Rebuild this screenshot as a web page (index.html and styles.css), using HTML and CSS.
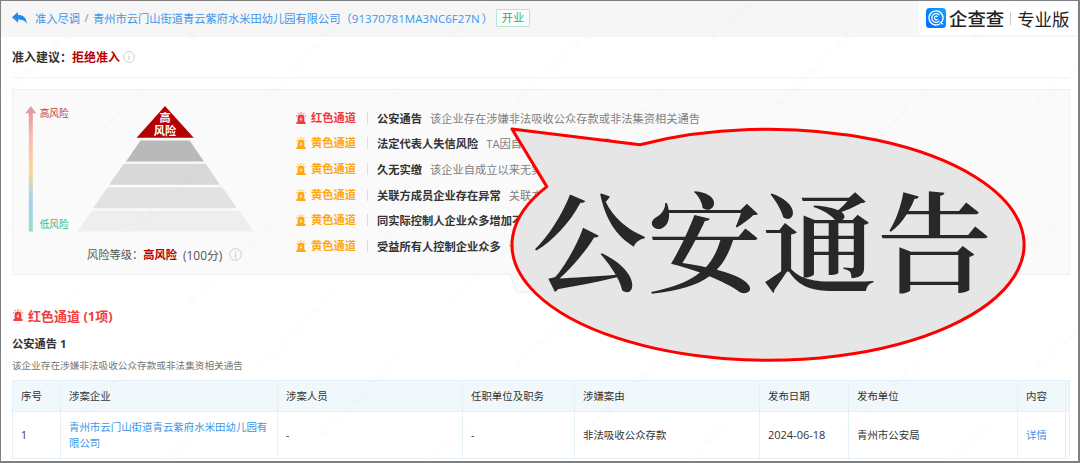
FILE: index.html
```html
<!DOCTYPE html>
<html lang="zh-CN">
<head>
<meta charset="utf-8">
<title>准入尽调</title>
<link rel="stylesheet" href="styles.css">
</head>
<body>

<svg width="0" height="0" class="defs">
	<symbol id="siren" viewBox="0 0 10 12">
		<path d="M5 0v1.700M1.800 .900l.900 1.400M8.200 .900l-.900 1.400M0 3.400l1.300.700M10 3.400l-1.300.700" stroke="currentColor" stroke-width=".9" fill="none"/>
		<path fill="currentColor" fill-rule="evenodd" d="M1.600 10.200V6a3.400 3.400 0 0 1 6.800 0v4.200zM5 5.500a1.300 1.300 0 0 0-1 2.100L4.700 8.700h.6L6 7.600A1.300 1.300 0 0 0 5 5.500z"/>
		<circle cx="5" cy="6.800" r=".7" fill="currentColor"/>
		<path fill="currentColor" d="M.400 10h9.200v2H.400z"/>
	</symbol>
	<symbol id="info" viewBox="0 0 12 12">
		<circle cx="6" cy="6" r="5.4" fill="none" stroke="currentColor" stroke-width=".9"/>
		<path d="M6 5v4M6 2.9v1.2" stroke="currentColor" stroke-width="1.1"/>
	</symbol>
</svg>

<div class="page">
	<header class="top">
		<svg class="back" viewBox="0 0 15 12"><path fill="#2189f0" d="M6 0v3.1c5.300 0 8.200 2.600 8.800 8.300C12.800 8.500 10.200 7.500 6 7.500v3.300L0 5.300z"/></svg>
		<a class="crumb">准入尽调</a>
		<span class="slash">/</span>
		<a class="company">青州市云门山街道青云紫府水米田幼儿园有限公司（<span class="code">91370781MA3NC6F27N</span>）</a>
		<span class="tag">开业</span>
		<div class="brand">
			<svg class="logo" viewBox="0 0 20 20">
				<defs><linearGradient id="blue" x1="0" y1="1" x2="1" y2="0"><stop offset="0" stop-color="#0066ff"/><stop offset="1" stop-color="#14a6fb"/></linearGradient></defs>
				<rect width="20" height="20" rx="3.500" fill="url(#blue)"/>
				<g fill="none" stroke="#fff" stroke-width="1.300">
					<path d="M14 15.700A7 7 0 1 1 16.400 12.800L14.700 14.700l2 1.600"/>
					<path d="M13.300 12.800A4.300 4.300 0 1 1 13.300 7.200"/>
					<path d="M11.600 11.200A1.800 1.800 0 1 1 11.600 8.800"/>
				</g>
			</svg>
			<span class="name">企查查</span>
			<i class="bar"></i>
			<span class="edition">专业版</span>
		</div>
	</header>

	<div class="advice">
		<b>准入建议：</b><b class="reject">拒绝准入</b>
		<svg class="info"><use href="#info"/></svg>
	</div>

	<section class="panel">
		<div class="chart">
			<svg class="pyramid" viewBox="24 104 232 130">
				<defs>
					<linearGradient id="scale" x1="0" y1="0" x2="0" y2="1">
						<stop offset="0" stop-color="#e29a9a"/>
						<stop offset=".22" stop-color="#fbb9bb"/>
						<stop offset=".48" stop-color="#fdd692"/>
						<stop offset=".76" stop-color="#a0d2f7"/>
						<stop offset="1" stop-color="#96dfb9"/>
					</linearGradient>
				</defs>
				<rect x="28.800" y="111" width="4" height="120.500" fill="url(#scale)"/>
				<path d="M30.800 106l5.400 7.200H25.400z" fill="#e29a9a"/>
				<text x="39.700" y="116.700" class="high">高风险</text>
				<text x="39.700" y="227.700" class="low">低风险</text>
				<path d="M165 106l28.700 31.800H136.600z" fill="#b30000"/>
				<path d="M140.500 140.400h49.200l14.200 21H126z" fill="#b9b9b9"/>
				<path d="M124 163.800h81.700l14.300 21H109z" fill="#d8d8d8"/>
				<path d="M107.700 187.200h114.800l14.300 21H93z" fill="#e2e2e2"/>
				<path d="M91.700 210.700h147.800l13.900 20.800H77.300z" fill="#eee"/>
				<text x="165" y="122" class="peak">高</text>
				<text x="165" y="134.800" class="peak">风险</text>
			</svg>
			<div class="level">风险等级：<b>高风险</b><span class="score">(100分)</span><svg class="info big"><use href="#info"/></svg></div>
		</div>
		<ul class="channels">
			<li class="red"><svg class="siren"><use href="#siren"/></svg><b class="kind">红色通道</b><b class="title">公安通告</b><span>该企业存在涉嫌非法吸收公众存款或非法集资相关通告</span></li>
			<li><svg class="siren"><use href="#siren"/></svg><b class="kind">黄色通道</b><b class="title">法定代表人失信风险</b><span>TA因自身原因未按时缴费</span></li>
			<li><svg class="siren"><use href="#siren"/></svg><b class="kind">黄色通道</b><b class="title">久无实缴</b><span>该企业自成立以来无实</span></li>
			<li><svg class="siren"><use href="#siren"/></svg><b class="kind">黄色通道</b><b class="title">关联方成员企业存在异常</b><span>关联方</span></li>
			<li><svg class="siren"><use href="#siren"/></svg><b class="kind">黄色通道</b><b class="title">同实际控制人企业众多增加不</b></li>
			<li><svg class="siren"><use href="#siren"/></svg><b class="kind">黄色通道</b><b class="title">受益所有人控制企业众多</b><span>该</span></li>
		</ul>
		<svg class="fold" viewBox="0 0 62 19"><path d="M.5 0L5 15.500q.8 2.500 3 2.500h46q2.200 0 3-2.500L61.500 0" fill="#fafafa" stroke="#eee"/></svg>
	</section>

	<h2><svg class="siren"><use href="#siren"/></svg>红色通道 (1项)</h2>
	<h3>公安通告 1</h3>
	<p class="desc">该企业存在涉嫌非法吸收公众存款或非法集资相关通告</p>

	<table>
		<colgroup>
			<col class="c1"><col class="c2"><col class="c3"><col class="c4"><col class="c5"><col class="c6"><col class="c7"><col class="c8"><col class="c9">
		</colgroup>
		<tr><th>序号</th><th>涉案企业</th><th>涉案人员</th><th>任职单位及职务</th><th>涉嫌案由</th><th>发布日期</th><th>发布单位</th><th>内容</th><th></th></tr>
		<tr><td>1</td><td><a>青州市云门山街道青云紫府水米田幼儿园有限公司</a></td><td>-</td><td>-</td><td>非法吸收公众存款</td><td class="date">2024-06-18</td><td>青州市公安局</td><td><a>详情</a></td><td></td></tr>
	</table>

	<svg class="watermark">
		<defs>
			<pattern id="mark" width="261" height="264" patternUnits="userSpaceOnUse" patternTransform="translate(60 41)">
				<text transform="translate(3 132) rotate(-44)">R7E8HDPMZ3</text>
				<text transform="translate(68 198) rotate(-44)">R7E8HDPMZ3</text>
				<text transform="translate(133 264) rotate(-44)">R7E8HDPMZ3</text>
				<text transform="translate(198 66) rotate(-44)">R7E8HDPMZ3</text>
				<text transform="translate(-63 66) rotate(-44)">R7E8HDPMZ3</text>
				<text transform="translate(198 330) rotate(-44)">R7E8HDPMZ3</text>
				<text transform="translate(-63 330) rotate(-44)">R7E8HDPMZ3</text>
			</pattern>
		</defs>
		<rect width="1080" height="463" fill="url(#mark)"/>
	</svg>

	<div class="callout">
		<svg viewBox="508 124 520 240"><path d="M512 129L640 144.700A256 115.500 0 1 1 546.800 186.600z" fill="#e6e6e6" stroke="#f00" stroke-width="3" stroke-linejoin="round"/></svg>
		<strong>公安通告</strong>
	</div>
</div>

</body>
</html>
```
FILE: styles.css
```css
*{
	box-sizing: border-box;
}

body{
	margin: 0;
	background: #fff;
	color: #333;
	font-family: "Open Sans", "Noto Sans CJK SC", sans-serif;
	font-size: 11.25px;
}

.defs{
	position: absolute;
}

.page{
	position: relative;
	width: 1080px;
	height: 463px;
	overflow: hidden;
	border: 1px solid #808080;
	border-right-width: 2px;
	border-bottom-width: 2px;
}

a{
	color: #3c96ea;
}

.top{
	display: flex;
	align-items: center;
	height: 36px;
	padding: 0 1px 3px 11px;
	background: #f6f6f6;
	white-space: nowrap;
}

.back{
	width: 15px;
	height: 12px;
}

.crumb{
	margin-left: 8px;
}

.slash{
	width: 13px;
	text-align: center;
	color: #888;
}

.code{
	display: inline-block;
	width: 130px;
	font-size: 11.6px;
}

.tag{
	margin-left: 3px;
	width: 34px;
	height: 18px;
	line-height: 16px;
	border: 1px solid #b4e6d0;
	border-radius: 1px;
	text-align: center;
	background: #fafefc;
	color: #23b277;
}

.brand{
	display: flex;
	align-items: center;
	align-self: flex-start;
	margin-left: auto;
	width: 158px;
	height: 34px;
	padding-left: 7px;
	background: #fff;
	color: #222;
}

.logo{
	width: 20px;
	height: 20px;
	margin-right: 3px;
}

.name{
	font-size: 18.4px;
	font-weight: 500;
}

.bar{
	width: 1px;
	height: 13px;
	margin: 0 6px;
	background: #ccc;
}

.edition{
	font-size: 17.4px;
}

.advice{
	display: flex;
	align-items: center;
	height: 41px;
	margin: 0 8px 0 11px;
	border-bottom: 1px solid #f3f3f3;
	font-size: 12px;
}

.reject{
	color: #b80000;
}

.info{
	width: 12px;
	height: 12px;
	margin-left: 3px;
	color: #ccc;
}

.panel{
	position: relative;
	display: flex;
	height: 186px;
	margin: 11px 8px 0 11px;
	border: 1px solid #f0f0f0;
	background: #fafafa;
}

.chart{
	width: 282px;
	padding: 14px 0 0 11px;
}

.pyramid{
	display: block;
	width: 232px;
	height: 130px;
}

.high, .low{
	font-size: 9.7px;
	fill: #c03c3c;
}

.low{
	fill: #34bd81;
}

.peak{
	font-size: 11.2px;
	font-weight: 600;
	text-anchor: middle;
	fill: #fff;
}

.level{
	display: flex;
	align-items: center;
	height: 18px;
	margin: 11px 0 0 63px;
	color: #555;
}

.level b{
	color: #b30000;
}

.score{
	margin-left: 6px;
	font-size: 11.9px;
}

.big{
	width: 13px;
	height: 13px;
	margin-left: 7px;
}

.channels{
	margin: 0;
	padding: 14.700px 0 0;
	list-style: none;
}

.channels li{
	display: flex;
	align-items: center;
	height: 25.700px;
	color: #ffa710;
	white-space: nowrap;
}

.channels .red{
	color: #f03c3c;
}

.siren{
	width: 10px;
	height: 12px;
	margin-left: 1px;
	flex: none;
}

.kind{
	width: 57px;
	margin-left: 5px;
	height: 12px;
	line-height: 12px;
	border-right: 1px solid #ddd;
}

.title{
	margin: 0 8px 0 9px;
	color: #333;
}

.channels span{
	color: #808080;
}

.fold{
	position: absolute;
	top: 184px;
	left: 497px;
	width: 62px;
	height: 19px;
}

h2{
	display: flex;
	align-items: center;
	gap: 5px;
	height: 20px;
	margin: 30px 0 0 11px;
	font-size: 13px;
	color: #f04040;
}

h3{
	height: 18px;
	line-height: 18px;
	margin: 10px 0 0 11px;
	font-size: 11.25px;
}

.desc{
	height: 14px;
	line-height: 14px;
	margin: 6px 0 7px 11px;
	font-size: 9.650px;
	color: #777;
}

table{
	width: 1057px;
	margin-left: 11px;
	border-collapse: collapse;
	table-layout: fixed;
	font-size: 10.450px;
	line-height: 16px;
}

th, td{
	padding: 0 8px;
	border: 1px solid #e4f0f7;
	text-align: left;
	font-weight: normal;
}

th{
	height: 31px;
	background: #f0f8fc;
}

td{
	height: 47px;
}

.date{
	font-size: 11px;
}

.c1{ width: 48px; }
.c2{ width: 217px; }
.c3{ width: 185px; }
.c4{ width: 112px; }
.c5{ width: 185px; }
.c6{ width: 89px; }
.c7{ width: 169px; }
.c8{ width: 48px; }
.c9{ width: 4px; }

th:last-child, td:last-child{
	padding: 0;
}

.watermark{
	position: absolute;
	top: -1px;
	left: -1px;
	width: 1080px;
	height: 463px;
	fill: #000;
	opacity: .016;
	font-size: 10px;
	letter-spacing: 5.200px;
	pointer-events: none;
}

.callout{
	position: absolute;
	top: 123px;
	left: 507px;
	width: 520px;
	height: 240px;
}

.callout svg{
	display: block;
	width: 520px;
	height: 240px;
}

.callout strong{
	position: absolute;
	top: 55px;
	left: 24px;
	line-height: 116px;
	font-family: "Noto Serif CJK SC", "Noto Sans CJK SC", serif;
	font-size: 115px;
	font-weight: 600;
	white-space: nowrap;
	color: #282828;
	transform: scaleY(.95);
}
```
